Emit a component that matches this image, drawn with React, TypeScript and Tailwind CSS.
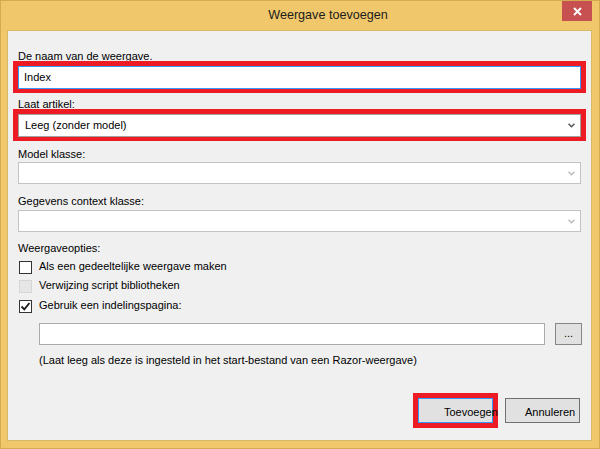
import React from "react";

function Chevron({ color }: { color: string }) {
  return (
    <svg width="7" height="5" viewBox="0 0 7 5" className="shrink-0">
      <path d="M0.5 0.8 L3.5 3.8 L6.5 0.8" fill="none" stroke={color} strokeWidth="1.5" />
    </svg>
  );
}

function Label({ children, mt }: { children: React.ReactNode; mt: string }) {
  return <div className={`${mt} ml-[5px] leading-[10px] h-[10px] whitespace-nowrap`}>{children}</div>;
}

export default function App() {
  return (
    <div className="w-[600px] h-[449px] bg-[#f0c86b] border border-[#d3ab52] flex flex-col font-['Liberation_Sans',Arial,sans-serif] text-[11px] text-black overflow-hidden">
      {/* title bar */}
      <div className="relative h-[29px] shrink-0 flex justify-center pl-[56px]">
        <div className="pt-[7px] text-[12.6px] leading-[15px] text-[#1b1b1b] whitespace-nowrap">Weergave toevoegen</div>
        <div className="absolute right-[7px] top-0 w-[30px] h-[20px] bg-[#c75050] flex items-center justify-center">
          <svg width="9" height="9" viewBox="0 0 9 9">
            <path d="M1 1 L8 8 M8 1 L1 8" stroke="#ffffff" strokeWidth="2" />
          </svg>
        </div>
      </div>

      {/* client */}
      <div className="ml-[6px] w-[585px] h-[411px] shrink-0 bg-[#f0f0f0] border border-[#d9b866] px-[5px] flex flex-col">
        <Label mt="mt-[20px]">De naam van de weergave.</Label>
        <div className="bg-[#ed1c24] pt-[5px] pb-[4px] px-[5px]">
          <div className="h-[23px] bg-white border border-[#3399ff] flex items-center pl-[5px] leading-[13px]">Index</div>
        </div>

        <Label mt="mt-[6px]">Laat artikel:</Label>
        <div className="bg-[#ed1c24] pt-[5px] pb-[4px] px-[5px]">
          <div className="h-[23px] bg-white border border-[#a2a2a2] flex items-center justify-between pl-[6px] pr-[5px] leading-[13px]">
            <span>Leeg (zonder model)</span>
            <Chevron color="#555555" />
          </div>
        </div>

        <Label mt="mt-[8px]">Model klasse:</Label>
        <div className="mt-[3px] mx-[5px] h-[22px] bg-white border border-[#c3c3c3] flex items-center justify-end pr-[5px]">
          <Chevron color="#bdbdbd" />
        </div>

        <Label mt="mt-[12px]">Gegevens context klasse:</Label>
        <div className="mt-[4px] mx-[5px] h-[22px] bg-white border border-[#c3c3c3] flex items-center justify-end pr-[5px]">
          <Chevron color="#bdbdbd" />
        </div>

        <Label mt="mt-[11px]">Weergaveopties:</Label>

        <div className="mt-[8px] ml-[6px] flex items-start gap-[7px]">
          <div className="w-[13px] h-[13px] bg-white border border-[#333333] shrink-0" />
          <span className="leading-[10px]">Als een gedeeltelijke weergave maken</span>
        </div>
        <div className="mt-[6px] ml-[6px] flex items-start gap-[7px]">
          <div className="w-[13px] h-[13px] bg-[#e6e6e6] border border-[#d6d6d6] shrink-0" />
          <span className="leading-[10px]">Verwijzing script bibliotheken</span>
        </div>
        <div className="mt-[7px] ml-[6px] flex items-start gap-[7px]">
          <div className="w-[13px] h-[13px] bg-white border border-[#333333] shrink-0 flex items-center justify-center">
            <svg width="11" height="11" viewBox="0 0 11 11">
              <path d="M1.5 5.5 L4.3 8.3 L9.5 2" fill="none" stroke="#1a1a1a" strokeWidth="1.8" />
            </svg>
          </div>
          <span className="leading-[10px]">Gebruik een indelingspagina:</span>
        </div>

        <div className="mt-[10px] ml-[26px] flex items-center gap-[10px]">
          <div className="w-[506px] h-[22px] bg-white border border-[#ababab]" />
          <div className="w-[27px] h-[22px] bg-[#e1e1e1] border border-[#868686] flex items-center justify-center leading-[10px] pb-[3px]">...</div>
        </div>

        <div className="mt-[10px] ml-[26px] leading-[10px] whitespace-nowrap">
          (Laat leeg als deze is ingesteld in het start-bestand van een Razor-weergave)
        </div>

        <div className="mt-[28px] flex items-center justify-end pr-[6px] gap-[7px]">
          <div className="bg-[#ed1c24] py-[5px] px-[5px]">
            <div className="relative w-[75px] h-[25px] bg-[#e1e1e1] border border-[#3399ff] flex items-center pl-[25px] pt-[3px] leading-[13px] whitespace-nowrap">
              Toevoegen
            </div>
          </div>
          <div className="w-[75px] h-[25px] bg-[#e1e1e1] border border-[#707070] flex items-center pl-[19px] pt-[3px] leading-[13px] whitespace-nowrap">
            Annuleren
          </div>
        </div>
      </div>
    </div>
  );
}
